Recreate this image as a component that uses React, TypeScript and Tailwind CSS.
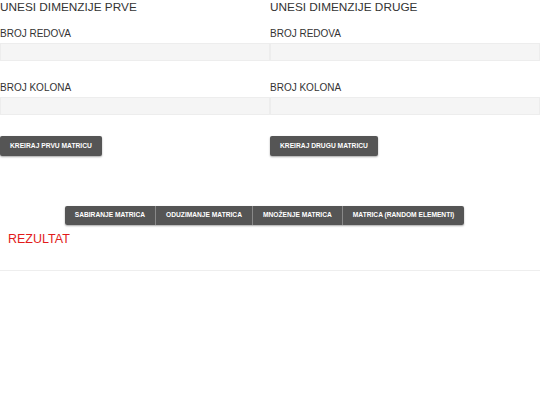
import React from 'react'

function DimForm({ title, button }: { title: string; button: string }) {
  return (
    <div className="flex flex-col">
      <h3 className="text-[11.8px] leading-[14px] text-[#333]">{title}</h3>
      <label className="text-[10px] leading-[14px] text-[#333] mt-[13px]">BROJ REDOVA</label>
      <input
        type="text"
        className="h-[18px] mt-[2px] bg-[#f5f5f5] border border-[#ededed] outline-none"
      />
      <label className="text-[10px] leading-[14px] text-[#333] mt-[20px]">BROJ KOLONA</label>
      <input
        type="text"
        className="h-[18px] mt-[2px] bg-[#f5f5f5] border border-[#ededed] outline-none"
      />
      <div className="flex mt-[21px]">
        <button className="h-[20px] px-[10px] bg-[#555] text-white text-[6.7px] leading-none font-bold rounded-[2px] shadow-[0_1px_2px_rgba(0,0,0,0.35)]">
          {button}
        </button>
      </div>
    </div>
  )
}

export default function App() {
  const ops = ['SABIRANJE MATRICA', 'ODUZIMANJE MATRICA', 'MNOŽENJE MATRICA', 'MATRICA (RANDOM ELEMENTI)']
  return (
    <div className="w-[540px] h-[405px] bg-white font-['Liberation_Sans',Arial,sans-serif]">
      <div className="grid grid-cols-2">
        <DimForm title="UNESI DIMENZIJE PRVE" button="KREIRAJ PRVU MATRICU" />
        <DimForm title="UNESI DIMENZIJE DRUGE" button="KREIRAJ DRUGU MATRICU" />
      </div>
      <div className="flex justify-center mt-[50px]">
        <div className="flex rounded-[2px] overflow-hidden shadow-[0_1px_2px_rgba(0,0,0,0.35)] mr-[11px]">
          {ops.map((op, i) => (
            <button
              key={op}
              className={`h-[19px] px-[10px] bg-[#555] text-white text-[6.65px] leading-none font-bold ${i > 0 ? 'border-l border-[#888]' : ''}`}
            >
              {op}
            </button>
          ))}
        </div>
      </div>
      <div className="px-[8px] mt-[7px] text-[12.5px] leading-[14px] text-[#e21b1b]">REZULTAT</div>
      <div className="mt-[24px] border-t border-[#eee]" />
    </div>
  )
}
